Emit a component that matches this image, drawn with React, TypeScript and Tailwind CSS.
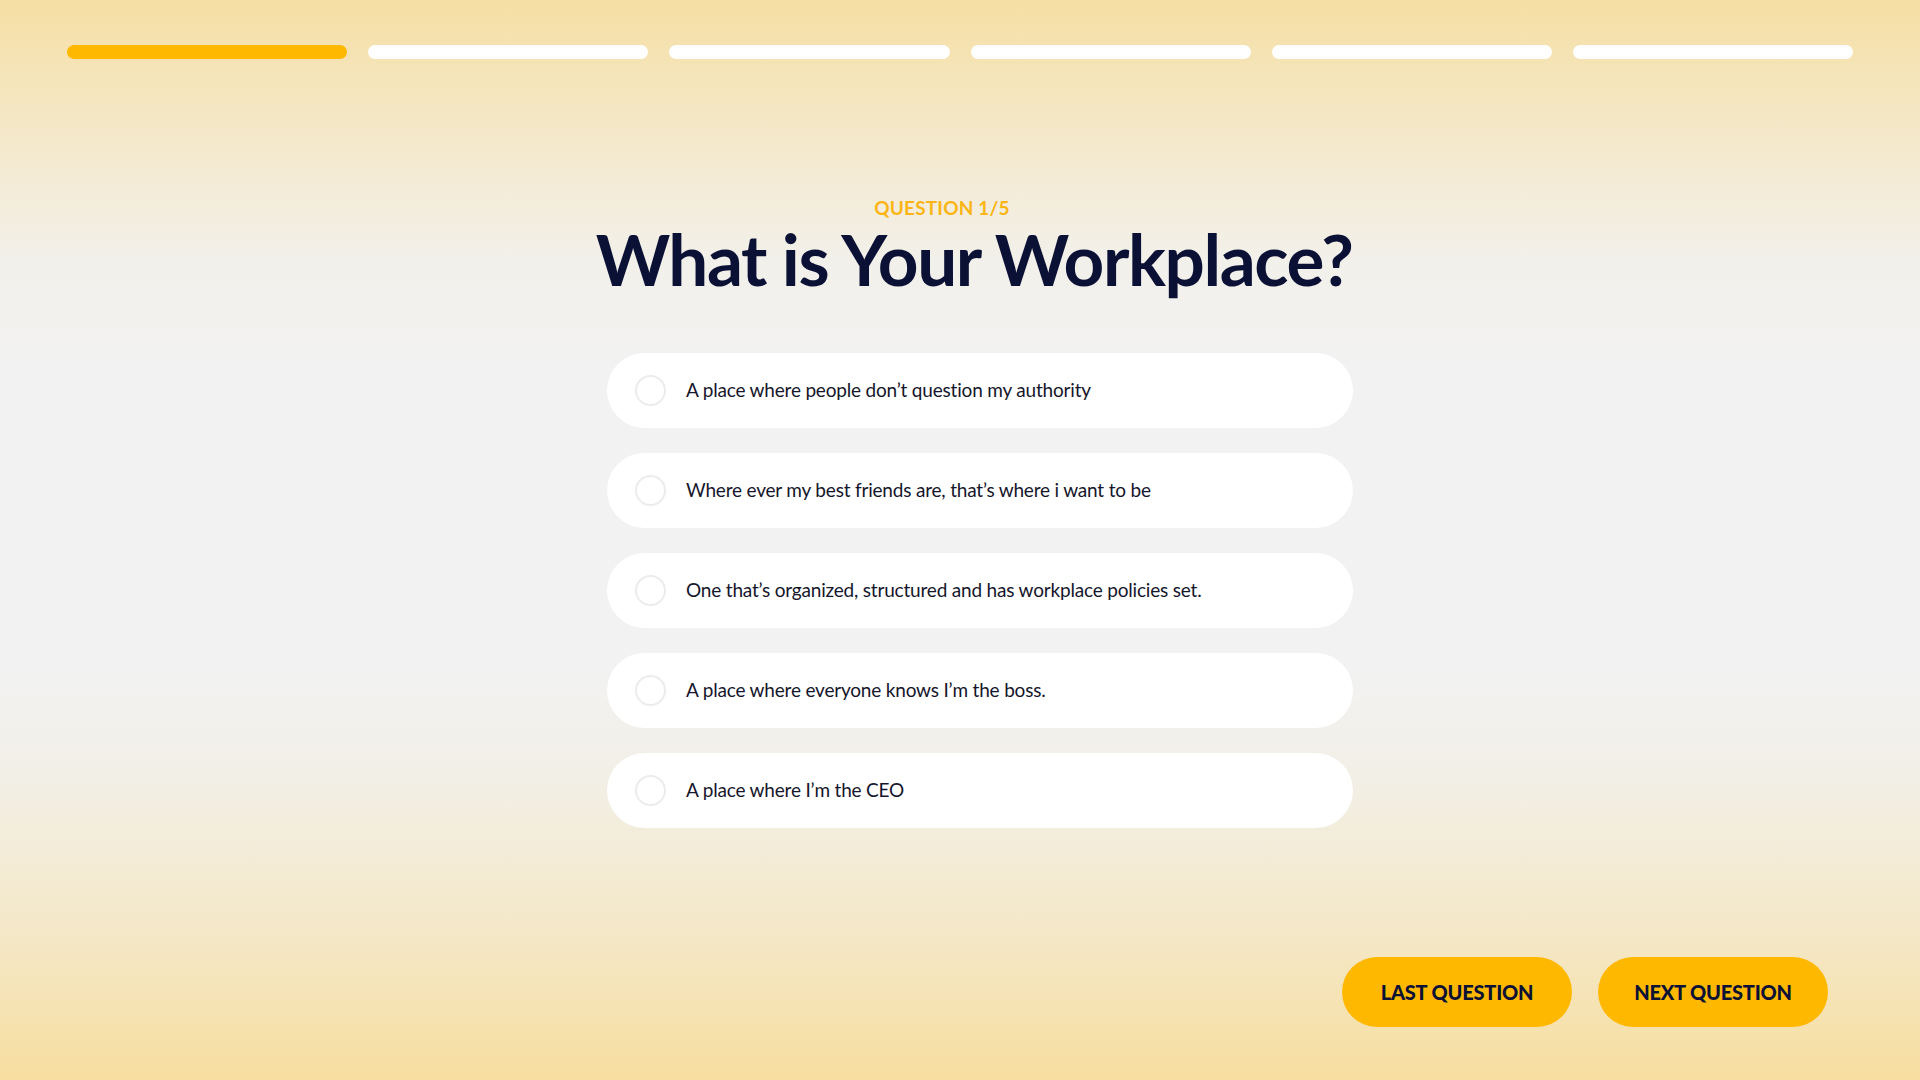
import React from "react";

const options = [
  "A place where people don\u2019t question my authority",
  "Where ever my best friends are, that\u2019s where i want to be",
  "One that\u2019s organized, structured and has workplace policies set.",
  "A place where everyone knows I\u2019m the boss.",
  "A place where I\u2019m the CEO",
];

export default function App() {
  return (
    <div
      className="w-[1920px] h-[1080px] flex flex-col bg-[linear-gradient(to_bottom,#f6dfa4_0%,#f4e8c8_12%,#f2f0ea_24%,#f2f2f2_34%,#f2f2f2_62%,#f2efe6_72%,#f4e8c8_86%,#f7dea0_100%)]"
      style={{ fontFamily: "Lato, 'Noto Sans', sans-serif" }}
    >
      {/* progress */}
      <div className="flex gap-[21px] px-[67px] pt-[45px]">
        {[0, 1, 2, 3, 4, 5].map((i) => (
          <div
            key={i}
            className={
              i === 0
                ? "flex-1 h-[14px] rounded-full bg-[#ffb800]"
                : "flex-1 h-[14px] rounded-full bg-white"
            }
          />
        ))}
      </div>

      {/* content */}
      <div className="ml-[607px] w-[746px] mt-[139px] flex flex-col">
        <div className="text-center pr-[76px] text-[19px] leading-[20px] font-bold text-[#fbb515] tracking-[0.01em]">
          QUESTION 1/5
        </div>
        <h1 className="flex justify-center pr-[12px] mt-[5px] text-[71px] leading-[72px] font-bold text-[#0b1035] tracking-[-0.02em] whitespace-nowrap">
          <span className="whitespace-nowrap">What is Your Workplace?</span>
        </h1>
        <div className="mt-[58px] flex flex-col gap-[25px]">
          {options.map((o) => (
            <div
              key={o}
              className="h-[75px] rounded-full bg-white flex items-center pl-[28px]"
            >
              <div className="w-[31px] h-[31px] rounded-full border-2 border-[#ececec] shrink-0" />
              <span className="ml-[20px] text-[19px] text-[#15162b] tracking-[-0.01em]">
                {o}
              </span>
            </div>
          ))}
        </div>
      </div>

      {/* buttons */}
      <div className="mt-auto mb-[53px] flex justify-end gap-[26px] pr-[92px]">
        <button className="w-[230px] h-[70px] rounded-full bg-[#ffb800] text-[20px] font-black text-[#0b1035] tracking-[-0.01em]">
          LAST QUESTION
        </button>
        <button className="w-[230px] h-[70px] rounded-full bg-[#ffb800] text-[20px] font-black text-[#0b1035] tracking-[-0.01em]">
          NEXT QUESTION
        </button>
      </div>
    </div>
  );
}
